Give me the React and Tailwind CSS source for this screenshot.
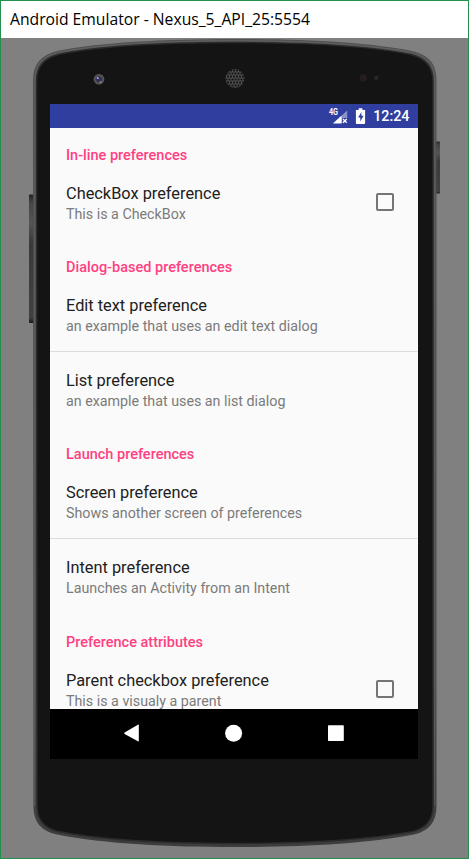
import React from "react";

const OUTER =
  "M33 80 C33 64 41 55 57 51 C98 42.5 165 39 235 39 C304 39 370 42.5 412 51 C429 55 436.5 64 436.5 80 L436.5 806 C436.5 822 429 831 414 834.5 C365 844 300 847 235 847 C169 847 105 844 57 834.5 C41 831 33.5 822 33.5 806 Z";
const INNER =
  "M36.5 81 C36.5 67 43 58.5 58 54.5 C98 46 165 42.5 235 42.5 C304 42.5 370 46 411 54.5 C426 58.5 433 67 433 81 L433 806 C433 820 426 828 413 831.5 C365 840.5 300 843.5 235 843.5 C169 843.5 105 840.5 58 831.5 C44 828 37 820 37 806 Z";

function PhoneShell() {
  return (
    <svg className="absolute inset-0 h-[820px] w-[467px]" viewBox="1 38 467 820" aria-hidden="true">
      <defs>
        <linearGradient id="rim" x1="0" y1="0" x2="0" y2="1">
          <stop offset="0" stopColor="#505153" />
          <stop offset="0.8" stopColor="#4a4b4d" />
          <stop offset="1" stopColor="#3c3c3c" />
        </linearGradient>
        <linearGradient id="key" x1="0" y1="0" x2="0" y2="1">
          <stop offset="0" stopColor="#222" />
          <stop offset="0.06" stopColor="#454545" />
          <stop offset="0.22" stopColor="#555" />
          <stop offset="0.38" stopColor="#3a3a3a" />
          <stop offset="0.96" stopColor="#414141" />
          <stop offset="1" stopColor="#151515" />
        </linearGradient>
        <pattern id="mesh" width="3" height="6" patternUnits="userSpaceOnUse">
          <rect width="3" height="6" fill="#505050" />
          <rect x=".5" y=".5" width="2" height="2" fill="#151515" />
          <rect x="-1" y="3.5" width="2" height="2" fill="#151515" />
          <rect x="2" y="3.5" width="2" height="2" fill="#151515" />
        </pattern>
        <radialGradient id="lens">
          <stop offset="0" stopColor="#3a3ab0" />
          <stop offset="0.35" stopColor="#26264e" />
          <stop offset="0.65" stopColor="#4c4c50" />
          <stop offset="1" stopColor="#5c5c5c" />
        </radialGradient>
      </defs>
      <rect x="29" y="194.5" width="5" height="128.5" rx="1" fill="url(#key)" />
      <rect x="436" y="141.5" width="4" height="52" rx="1" fill="url(#key)" />
      <path d={OUTER} fill="url(#rim)" />
      <path d={INNER} fill="#141414" stroke="#2b2b2c" strokeWidth="1.4" />
      <path
        d="M34.8 806V80C34.8 65 42 56.7 57.5 52.7C98 44.3 165 40.7 235 40.7C304 40.7 370 44.3 411.5 52.7C428 56.7 434.8 65 434.8 80V806"
        fill="none"
        stroke="#69696c"
        strokeWidth=".7"
      />
      <circle cx="99" cy="79.3" r="5.3" fill="url(#lens)" />
      <circle cx="97.8" cy="78" r="1" fill="#b5b5c4" />
      <circle cx="100.5" cy="82" r="1" fill="#8b8b8b" />
      <circle cx="235" cy="78.6" r="9.5" fill="url(#mesh)" />
      <circle cx="363.3" cy="78" r="3.7" fill="#241c1d" />
      <circle cx="376.3" cy="77.8" r="2.5" fill="#232022" />
      <circle cx="376.3" cy="77.8" r="1" fill="#343034" />
    </svg>
  );
}

function StatusBar() {
  return (
    <div className="flex h-6 shrink-0 items-center justify-end bg-[#303f9f] pr-[8.5px] text-white">
      <svg className="h-6 w-[50px]" viewBox="323 104 50 24">
        <path d="M347.2 110.5V118H342.2V123H333.2Z" fill="#8992c9" />
        <path d="M341.5 115.8V123.4H333Z" fill="#fff" />
        <path d="M343 119L346.7 122.7M346.7 119L343 122.7" stroke="#fff" strokeWidth="1.3" />
        <path
          fillRule="evenodd"
          fill="#fff"
          d="M358.7 108.3h3.7v1.6h2.7v13.3q0 .8-.8.8h-7.6q-.8 0-.8-.8v-13.3h2.8zM361.4 112l-3.3 5.4h2.2v4.2l3.3-5.8h-2.2z"
        />
        <text x="329" y="115.3" fill="#fff" fontFamily="Roboto" fontWeight="700" fontSize="8.6" textLength="9" lengthAdjust="spacingAndGlyphs">
          4G
        </text>
      </svg>
      <span className="text-[14.3px] leading-6 font-medium">12:24</span>
    </div>
  );
}

function Header({ children }) {
  return (
    <h2 className="h-[37px] shrink-0 pt-[18px] pl-4 text-[14.5px] leading-5 font-medium text-[#ff4081] last-of-type:h-[38px] last-of-type:pt-[19px]">
      {children}
    </h2>
  );
}

function Item({ title, summary, divider, checkbox }) {
  return (
    <div
      className={`flex h-[75px] shrink-0 items-start justify-between pt-[18px] pr-6 pl-4 ${
        divider ? "border-b border-[#dcdcdc]" : ""
      }`}
    >
      <div>
        <div className="text-[16.35px] leading-[22px] text-[#212121]">{title}</div>
        <div className="-mt-px text-[14.28px] leading-5 text-[#7b7b7b]">{summary}</div>
      </div>
      {checkbox && <span className="mt-[10px] h-[18px] w-[18px] rounded-[2px] border-2 border-[#757575]" />}
    </div>
  );
}

function NavBar() {
  return (
    <div className="h-[50px] shrink-0 bg-black">
      <svg className="h-[50px] w-[368px]" viewBox="50 709 368 50" fill="#fff">
        <path d="M138.8 725.2V740.8Q138.8 741.8 137.9 741.3L124.6 733.9Q123.6 733.2 124.6 732.5L137.9 724.7Q138.8 724.2 138.8 725.2Z" />
        <circle cx="233.6" cy="733.2" r="8.5" />
        <rect x="328" y="725.2" width="15.8" height="15.8" rx=".7" />
      </svg>
    </div>
  );
}

export default function App() {
  return (
    <div className="flex h-[859px] w-[469px] flex-col border border-[#23904f] bg-[#808080]">
      <div className="flex h-[37px] shrink-0 items-center bg-white pl-[9px] font-['Open_Sans',sans-serif] text-[15.7px] whitespace-nowrap text-black">
        Android Emulator - Nexus_5_API_25:5554
      </div>
      <div className="relative h-[820px] shrink-0">
        <PhoneShell />
        <div className="relative pt-[66px] pl-[49px]">
          <div className="flex h-[655px] w-[368px] flex-col bg-[#fafafa] font-[Roboto,sans-serif]">
            <StatusBar />
            <div className="flex h-[581px] shrink-0 flex-col overflow-hidden">
              <Header>In-line preferences</Header>
              <Item title="CheckBox preference" summary="This is a CheckBox" checkbox />
              <Header>Dialog-based preferences</Header>
              <Item title="Edit text preference" summary="an example that uses an edit text dialog" divider />
              <Item title="List preference" summary="an example that uses an list dialog" />
              <Header>Launch preferences</Header>
              <Item title="Screen preference" summary="Shows another screen of preferences" divider />
              <Item title="Intent preference" summary="Launches an Activity from an Intent" />
              <Header>Preference attributes</Header>
              <Item title="Parent checkbox preference" summary="This is a visualy a parent" checkbox />
            </div>
            <NavBar />
          </div>
        </div>
      </div>
    </div>
  );
}
